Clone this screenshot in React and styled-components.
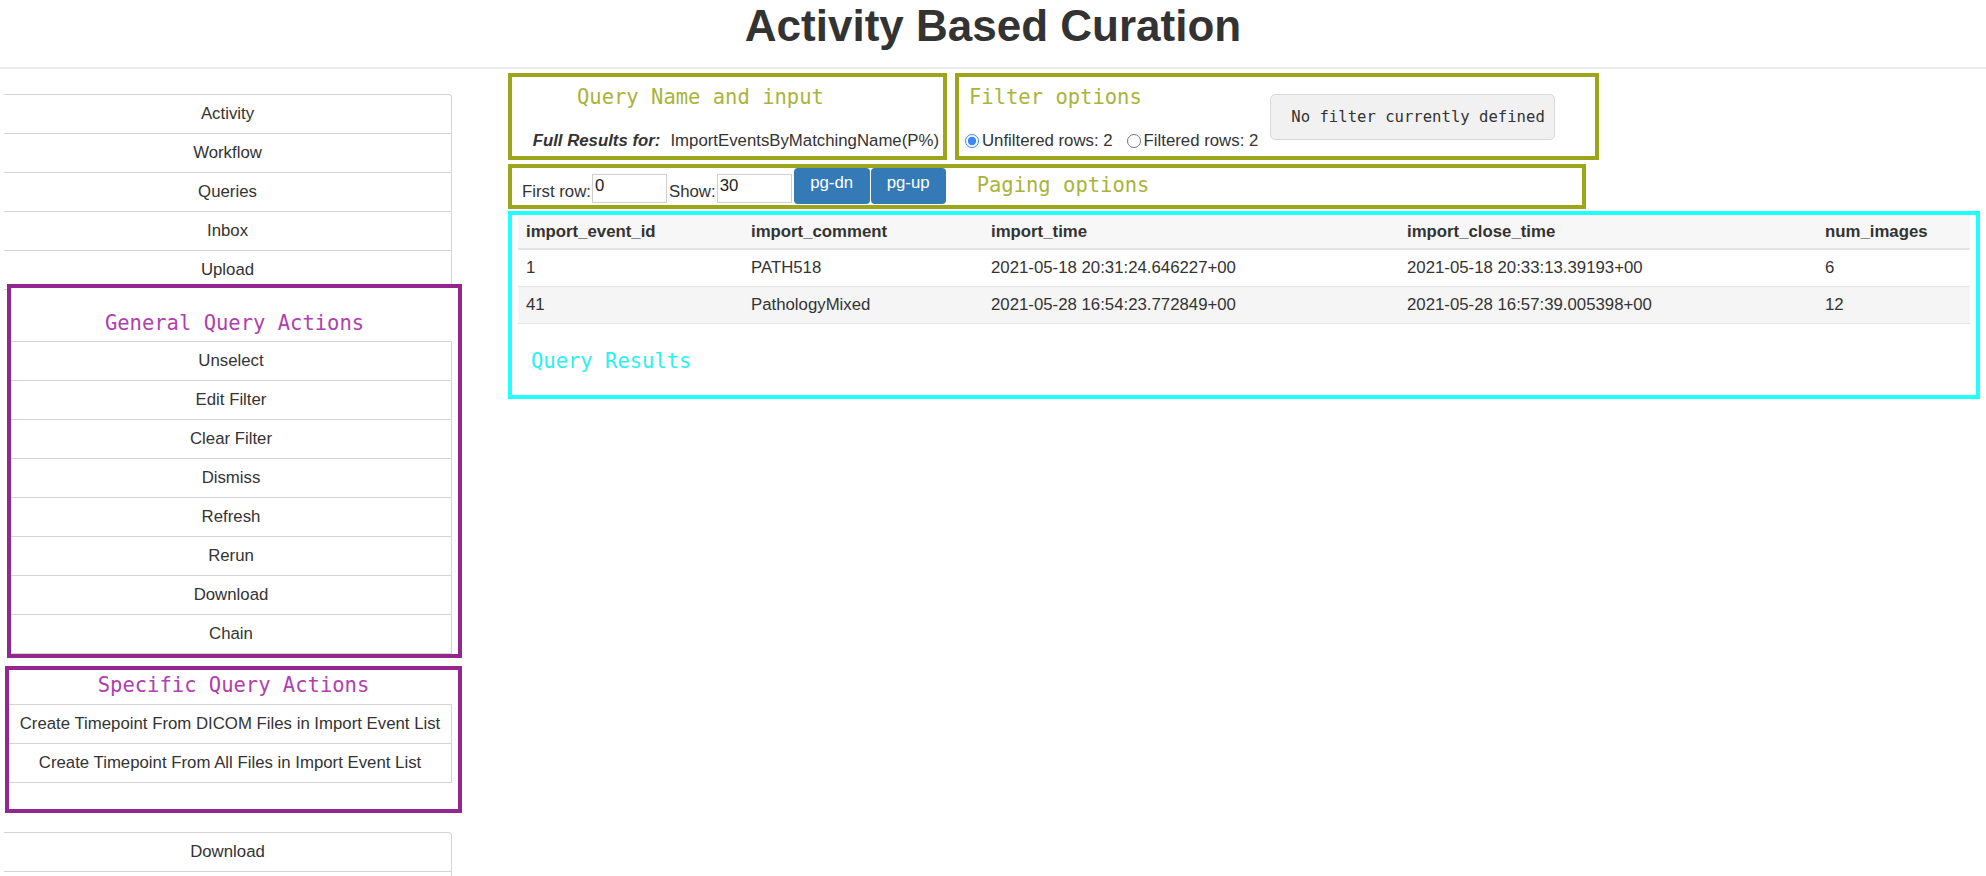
import React from 'react';
import styled, { createGlobalStyle } from 'styled-components';

const GlobalStyle = createGlobalStyle`
  html, body {
    margin: 0;
    overflow: hidden;
  }
  body {
    font-family: "Liberation Sans", Arial, Helvetica, sans-serif;
    color: #333;
    background: #fff;
  }
`;

const MONO = '"DejaVu Sans Mono", "Liberation Mono", monospace';
const SANS = '"Liberation Sans", Arial, Helvetica, sans-serif';
const TEXT_SIZE = '16.8px';
const OLIVE = '#9ca61b';
const OLIVE_TEXT = '#a9b43b';
const PURPLE = '#93278f';
const PURPLE_TEXT = '#b040ae';
const CYAN = '#22ffff';
const CYAN_TEXT = '#2cf0f0';

const Header = styled.header`
  height: 67px;
  border-bottom: 2px solid #ececec;
  text-align: center;
`;

const Title = styled.h1`
  margin: 0;
  padding-top: 1px;
  font-size: 44px;
  line-height: 49px;
  font-weight: bold;
  color: #333;
`;

const Layout = styled.div`
  display: flex;
  align-items: flex-start;
`;

const Sidebar = styled.nav`
  width: 458px;
  padding-left: 4px;
  margin-top: 25px;
  display: flex;
  flex-direction: column;
  flex-shrink: 0;
`;

const NavButton = styled.div`
  width: 448px;
  height: ${(p) => (p.$empty ? '39px' : 'auto')};
  box-sizing: border-box;
  border: 1px solid #d4d4d4;
  border-left: none;
  border-top: ${(p) => (p.$first ? '1px solid #d4d4d4' : 'none')};
  border-top-right-radius: ${(p) => (p.$first ? '4px' : '0')};
  padding: 9px 0;
  line-height: 20px;
  font-size: ${TEXT_SIZE};
  text-align: center;
  color: #333;
  background: #fff;
`;

const ActionGroup = styled.section`
  box-sizing: border-box;
  margin-left: ${(p) => p.$left}px;
  margin-top: ${(p) => p.$top}px;
  width: ${(p) => 458 - p.$left}px;
  border: 4px solid ${PURPLE};
  padding-bottom: ${(p) => p.$bottom}px;
  position: relative;
  z-index: 1;
  background: #fff;
`;

const GroupTitle = styled.div`
  font-family: ${MONO};
  font-size: 20.5px;
  line-height: 26px;
  color: ${PURPLE_TEXT};
  text-align: center;
  padding-top: ${(p) => p.$top}px;
  padding-bottom: ${(p) => p.$bottom}px;
`;

const ActionButton = styled.div`
  margin-right: 6px;
  border: 1px solid #d4d4d4;
  border-left: none;
  border-top: ${(p) => (p.$first ? '1px solid #d4d4d4' : 'none')};
  padding: 9px 0;
  line-height: 20px;
  font-size: ${TEXT_SIZE};
  text-align: center;
  color: #333;
  white-space: nowrap;
`;

const BottomNav = styled.div`
  margin-top: 19px;
`;

const Main = styled.main`
  flex: 1;
  margin-left: 46px;
  margin-top: 4px;
  padding-right: 6px;
  display: flex;
  flex-direction: column;
`;

const TopRow = styled.div`
  display: flex;
  gap: 8px;
`;

const OliveBox = styled.div`
  box-sizing: border-box;
  border: 4px solid ${OLIVE};
  width: ${(p) => p.$w}px;
  height: ${(p) => p.$h}px;
`;

const MonoLabel = styled.div`
  font-family: ${MONO};
  font-size: 20.5px;
  line-height: 26px;
  color: ${(p) => p.$color || OLIVE_TEXT};
  white-space: nowrap;
`;

const QueryTitle = styled(MonoLabel)`
  margin-top: 7px;
  padding-left: 65px;
`;

const ResultLine = styled.div`
  margin-top: 21px;
  padding-right: 4px;
  text-align: right;
  font-size: ${TEXT_SIZE};
  line-height: 20px;
  white-space: nowrap;
  b {
    font-style: italic;
    margin-right: 10px;
  }
`;

const FilterInner = styled.div`
  display: flex;
  align-items: flex-start;
`;

const FilterLeft = styled.div`
  padding-left: 6px;
  display: flex;
  flex-direction: column;
`;

const FilterTitle = styled(MonoLabel)`
  margin-top: 7px;
  padding-left: 4px;
`;

const RadioRow = styled.div`
  margin-top: 21px;
  display: flex;
  align-items: center;
  font-size: ${TEXT_SIZE};
  line-height: 20px;
  white-space: nowrap;
`;

const RadioLabel = styled.label`
  display: flex;
  align-items: center;
  margin-right: ${(p) => p.$gap || 0}px;
  input {
    width: 14px;
    height: 14px;
    margin: 0 3px 0 0;
    accent-color: #3a86f5;
  }
`;

const NoFilter = styled.div`
  box-sizing: border-box;
  margin-top: 17px;
  margin-left: 12px;
  width: 285px;
  height: 46px;
  display: flex;
  align-items: center;
  padding-left: 20px;
  background: #f1f1f1;
  border: 1px solid #d8d8d8;
  border-radius: 5px;
  font-family: ${MONO};
  font-size: 15.6px;
  color: #333;
  white-space: nowrap;
`;

const PagingBox = styled(OliveBox)`
  margin-top: 4px;
  display: flex;
  align-items: flex-end;
  padding-left: 10px;
`;

const FieldLabel = styled.span`
  font-size: ${TEXT_SIZE};
  line-height: 20px;
  margin-bottom: 3px;
  margin-right: 1px;
  white-space: nowrap;
`;

const NumInput = styled.input`
  box-sizing: border-box;
  width: 75px;
  height: 29px;
  margin: 0 2px 2px 0;
  padding: 0 2px 6px;
  border: 1px solid #cfcfcf;
  font-family: ${SANS};
  font-size: ${TEXT_SIZE};
  color: #222;
`;

const PageButton = styled.button`
  box-sizing: border-box;
  width: ${(p) => p.$w}px;
  height: 36px;
  margin: 0 1px 1px 0;
  border: none;
  border-radius: 4px;
  background: #337ab7;
  color: #fff;
  font-family: ${SANS};
  font-size: ${TEXT_SIZE};
  padding: 0 0 6px;
`;

const PagingTitle = styled(MonoLabel)`
  align-self: center;
  margin-left: 30px;
  margin-bottom: 4px;
`;

const ResultsBox = styled.div`
  box-sizing: border-box;
  margin-top: 2px;
  height: 188px;
  border: 4px solid ${CYAN};
  padding: 0 6px;
`;

const Table = styled.table`
  width: 100%;
  table-layout: fixed;
  border-collapse: collapse;
  font-size: ${TEXT_SIZE};
  color: #333;
`;

const Th = styled.th`
  width: ${(p) => (p.$w ? `${p.$w - 16}px` : 'auto')};
  height: 33px;
  padding: 0 8px;
  text-align: left;
  font-weight: bold;
  background: #f7f7f7;
  border-bottom: 2px solid #e4e4e4;
  white-space: nowrap;
`;

const Tr = styled.tr`
  background: ${(p) => (p.$striped ? '#f5f5f5' : '#fff')};
`;

const Td = styled.td`
  height: 36px;
  padding: 0 8px;
  border-bottom: 1px solid #e4e4e4;
  white-space: nowrap;
`;

const ResultsTitle = styled(MonoLabel)`
  margin-top: 24px;
  padding-left: 13px;
`;

const navTop = ['Activity', 'Workflow', 'Queries', 'Inbox', 'Upload'];
const general = ['Unselect', 'Edit Filter', 'Clear Filter', 'Dismiss', 'Refresh', 'Rerun', 'Download', 'Chain'];
const specific = [
  'Create Timepoint From DICOM Files in Import Event List',
  'Create Timepoint From All Files in Import Event List',
];

const columns = [
  { key: 'import_event_id', w: 225 },
  { key: 'import_comment', w: 240 },
  { key: 'import_time', w: 416 },
  { key: 'import_close_time', w: 418 },
  { key: 'num_images' },
];

const rows = [
  ['1', 'PATH518', '2021-05-18 20:31:24.646227+00', '2021-05-18 20:33:13.39193+00', '6'],
  ['41', 'PathologyMixed', '2021-05-28 16:54:23.772849+00', '2021-05-28 16:57:39.005398+00', '12'],
];

const App = () => (
  <>
    <GlobalStyle />
    <Header>
      <Title>Activity Based Curation</Title>
    </Header>
    <Layout>
      <Sidebar>
        {navTop.map((label, i) => (
          <NavButton key={label} $first={i === 0}>{label}</NavButton>
        ))}

        <ActionGroup $left={3} $top={-6} $bottom={0}>
          <GroupTitle $top={22} $bottom={5}>General Query Actions</GroupTitle>
          {general.map((label, i) => (
            <ActionButton key={label} $first={i === 0}>{label}</ActionButton>
          ))}
        </ActionGroup>

        <ActionGroup $left={1} $top={8} $bottom={26}>
          <GroupTitle $top={2} $bottom={6}>Specific Query Actions</GroupTitle>
          {specific.map((label, i) => (
            <ActionButton key={label} $first={i === 0}>{label}</ActionButton>
          ))}
        </ActionGroup>

        <BottomNav>
          <NavButton $first>Download</NavButton>
          <NavButton $empty />
        </BottomNav>
      </Sidebar>

      <Main>
        <TopRow>
          <OliveBox $w={439} $h={87}>
            <QueryTitle>Query Name and input</QueryTitle>
            <ResultLine>
              <b>Full Results for:</b>ImportEventsByMatchingName(P%)
            </ResultLine>
          </OliveBox>
          <OliveBox $w={644} $h={87}>
            <FilterInner>
              <FilterLeft>
                <FilterTitle>Filter options</FilterTitle>
                <RadioRow>
                  <RadioLabel $gap={14}>
                    <input type="radio" name="rows" defaultChecked />
                    Unfiltered rows: 2
                  </RadioLabel>
                  <RadioLabel>
                    <input type="radio" name="rows" />
                    Filtered rows: 2
                  </RadioLabel>
                </RadioRow>
              </FilterLeft>
              <NoFilter>No filter currently defined</NoFilter>
            </FilterInner>
          </OliveBox>
        </TopRow>

        <PagingBox $w={1078} $h={45}>
          <FieldLabel>First row:</FieldLabel>
          <NumInput defaultValue="0" />
          <FieldLabel>Show:</FieldLabel>
          <NumInput defaultValue="30" />
          <PageButton $w={76}>pg-dn</PageButton>
          <PageButton $w={75}>pg-up</PageButton>
          <PagingTitle>Paging options</PagingTitle>
        </PagingBox>

        <ResultsBox>
          <Table>
            <thead>
              <tr>
                {columns.map((c) => (
                  <Th key={c.key} $w={c.w}>{c.key}</Th>
                ))}
              </tr>
            </thead>
            <tbody>
              {rows.map((r, i) => (
                <Tr key={r[0]} $striped={i % 2 === 1}>
                  {r.map((cell, j) => (
                    <Td key={j}>{cell}</Td>
                  ))}
                </Tr>
              ))}
            </tbody>
          </Table>
          <ResultsTitle $color={CYAN_TEXT}>Query Results</ResultsTitle>
        </ResultsBox>
      </Main>
    </Layout>
  </>
);

export default App;
